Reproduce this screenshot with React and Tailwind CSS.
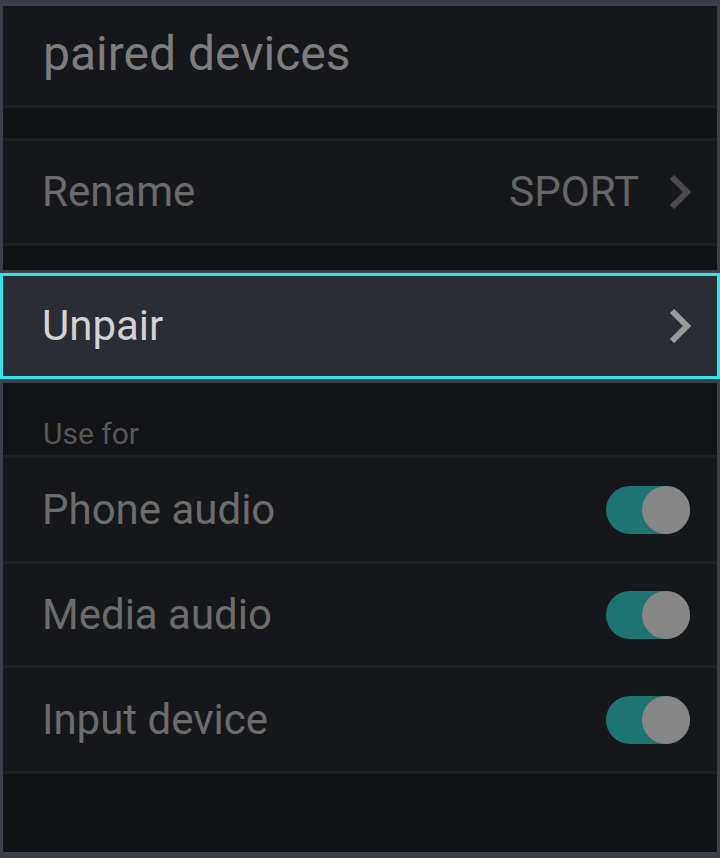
import React from 'react';

const Chevron = ({ className = '' }) => (
  <svg width="22" height="34" viewBox="0 0 22 34" className={className}>
    <path d="M3 2 L18 17 L3 32" fill="none" stroke="currentColor" strokeWidth="6" />
  </svg>
);

const Toggle = () => (
  <div className="relative w-[84px] h-[48px] rounded-full bg-[#1e7471]">
    <div className="absolute right-0 top-0 w-[48px] h-[48px] rounded-full bg-[#868686]" />
  </div>
);

const ToggleRow = ({ label, height }) => (
  <div className={`flex items-center justify-between pl-[39px] pr-[27px] bg-[#16171a] border-b-[3px] border-[#1e2023] ${height}`}>
    <span className="text-[42px] leading-none text-[#6c6c6c]">{label}</span>
    <Toggle />
  </div>
);

export default function App() {
  return (
    <div
      className="w-[720px] h-[858px] bg-[#3a3f4a] pt-[6px] pb-[6px] px-[3px] flex flex-col overflow-hidden"
      style={{ fontFamily: 'Roboto, "Liberation Sans", sans-serif' }}
    >
      <div className="h-[102px] shrink-0 flex items-center pl-[40px] bg-[#16171a] border-b-[3px] border-[#1e2023]">
        <span className="text-[48px] leading-none text-[#7d7d7d] -mt-[4px]">paired devices</span>
      </div>
      <div className="h-[30px] shrink-0 bg-[#111214]" />
      <div className="h-[108px] shrink-0 flex items-center justify-between pl-[39px] pr-[26px] bg-[#16171a] border-y-[3px] border-[#1e2023]">
        <span className="text-[42px] leading-none text-[#6a6a6a]">Rename</span>
        <div className="flex items-center gap-[30px]">
          <span className="text-[42px] leading-none text-[#666666]">SPORT</span>
          <Chevron className="text-[#4a4a4a]" />
        </div>
      </div>
      <div className="h-[24px] shrink-0 bg-[#111214]" />
      <div className="-mx-[3px] mt-[3px] mb-[4px] h-[106px] shrink-0 flex items-center justify-between pl-[39px] pr-[26px] bg-[#2a2d33] border-[3px] border-[#33e6e6]">
        <span className="text-[42px] leading-none text-[#d2d2d2]">Unpair</span>
        <Chevron className="text-[#9a9a9a]" />
      </div>
      <div className="h-[75px] shrink-0 flex items-end pb-[6px] pl-[40px] bg-[#121316] border-b-[3px] border-[#1e2023]">
        <span className="text-[30px] leading-none text-[#575757]">Use for</span>
      </div>
      <ToggleRow label="Phone audio" height="h-[106px] shrink-0" />
      <ToggleRow label="Media audio" height="h-[104px] shrink-0" />
      <ToggleRow label="Input device" height="h-[106px] shrink-0" />
      <div className="flex-1 bg-[#111214]" />
    </div>
  );
}
